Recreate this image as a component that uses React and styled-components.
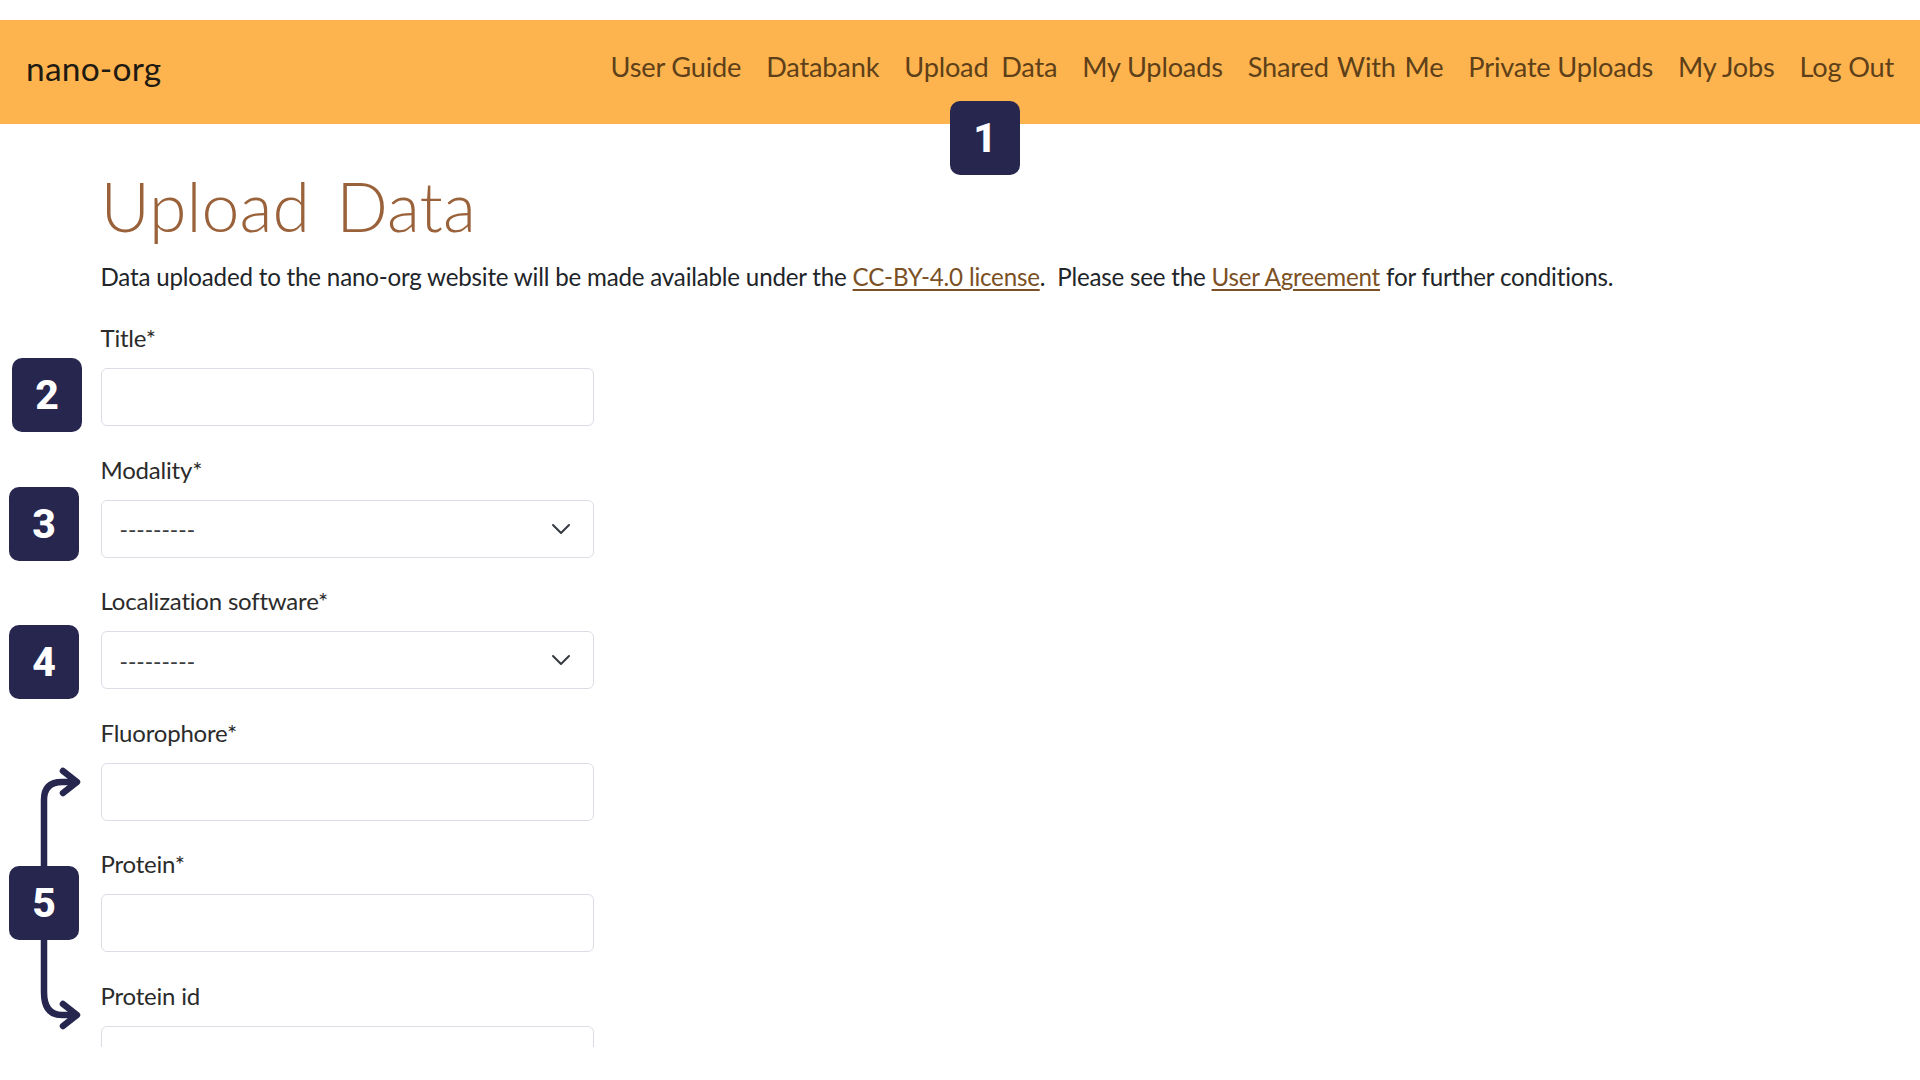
import React from "react";
import styled, { createGlobalStyle } from "styled-components";

const Global = createGlobalStyle`
  html, body { margin: 0; padding: 0; background: #fff; }
  body { font-family: Lato, "Noto Sans", sans-serif; color: #212529; }
`;

const Page = styled.div`
  position: relative;
  width: 1920px;
  height: 1047px;
  padding-top: 19.5px;
  box-sizing: border-box;
  overflow: hidden;
`;
const Navbar = styled.nav`
  height: 104.5px;
  background: #feb44e;
  display: flex;
  align-items: center;
  justify-content: space-between;
  padding: 0 26px 0 26px;
`;
const Brand = styled.a`
  font-size: 33.5px;
  color: #1f1a12;
  letter-spacing: 0.2px;
  margin-top: -7px;
`;
const NavList = styled.div`
  display: flex;
  gap: 25px;
  margin-top: -10px;
`;
const NavItem = styled.a`
  font-size: 27.2px;
  font-weight: 400;
  color: #5d4019;
  white-space: nowrap;
  word-spacing: ${(p) => p.$ws || 0}px;
  letter-spacing: -0.2px;
`;
const Main = styled.main`
  padding-left: 100.5px;
`;
const Heading = styled.h1`
  margin: 41px 0 0;
  font-size: 68px;
  line-height: 82px;
  font-weight: 300;
  color: #9a623a;
  word-spacing: 8px;
`;
const Lead = styled.p`
  margin: 12px 0 0;
  font-size: 24.15px;
  line-height: 36px;
  color: #212529;
  white-space: nowrap;
  letter-spacing: -0.2px;
`;
const Form = styled.form`
  margin-top: 25px;
  display: flex;
  flex-direction: column;
  gap: 25.6px;
`;
const Field = styled.div`
  display: flex;
  flex-direction: column;
  gap: 12px;
  width: 493.5px;
`;
const Label = styled.label`
  font-size: 24px;
  line-height: 36px;
  color: #2b2b2b;
  letter-spacing: -0.2px;
`;
const TextInput = styled.input`
  height: 58px;
  box-sizing: border-box;
  border: 1.5px solid #dadee4;
  border-radius: 6px;
  background: #fff;
  flex: none;
`;
const SelectWrap = styled.div`
  position: relative;
  height: 58px;
  flex: none;
`;
const Select = styled.select`
  appearance: none;
  width: 100%;
  height: 100%;
  box-sizing: border-box;
  border: 1.5px solid #dadee4;
  border-radius: 6px;
  background: #fff;
  padding: 2px 0 0 18px;
  font-family: Lato, sans-serif;
  font-size: 22.6px;
  color: #3a3d42;
`;
const Chevron = styled.svg`
  position: absolute;
  right: 21px;
  top: 17px;
  width: 24px;
  height: 24px;
  fill: none;
  stroke: #343a40;
  stroke-width: 2;
  stroke-linecap: round;
  stroke-linejoin: round;
`;
const Badge = styled.div`
  position: absolute;
  left: ${(p) => p.$x}px;
  top: ${(p) => p.$y}px;
  width: 70px;
  height: 74px;
  background: #27264f;
  border-radius: 10px;
  display: flex;
  align-items: center;
  justify-content: center;
  color: #fff;
  font-family: Roboto, sans-serif;
  font-weight: 800;
  font-size: 41px;
`;
const ArrowLayer = styled.svg`
  position: absolute;
  left: 30px;
  top: 760px;
  width: 60px;
  height: 270px;
  fill: none;
  stroke: #27264f;
  stroke-width: 6.5;
  stroke-linecap: round;
  stroke-linejoin: round;
`;
const Link = styled.a`
  color: #7b5024;
  text-decoration: underline;
  text-underline-offset: 3px;
`;

const navItems = [
  ["User Guide"],
  ["Databank"],
  ["Upload Data", 6],
  ["My Uploads"],
  ["Shared With Me", 2],
  ["Private Uploads"],
  ["My Jobs"],
  ["Log Out"],
];

const Dropdown = () => (
  <SelectWrap>
    <Select defaultValue="">
      <option value="">---------</option>
    </Select>
    <Chevron viewBox="0 0 24 24">
      <path d="M4 8 L12 16 L20 8" />
    </Chevron>
  </SelectWrap>
);

export default function App() {
  return (
    <>
      <Global />
      <Page>
        <Navbar>
          <Brand>nano-org</Brand>
          <NavList>
            {navItems.map(([t, ws]) => (
              <NavItem key={t} $ws={ws}>{t}</NavItem>
            ))}
          </NavList>
        </Navbar>
        <Main>
          <Heading>Upload Data</Heading>
          <Lead>
            Data uploaded to the nano-org website will be made available under the{" "}
            <Link>CC-BY-4.0 license</Link>.&nbsp; Please see the <Link>User Agreement</Link> for further conditions.
          </Lead>
          <Form>
            <Field><Label>Title*</Label><TextInput /></Field>
            <Field><Label>Modality*</Label><Dropdown /></Field>
            <Field><Label>Localization software*</Label><Dropdown /></Field>
            <Field><Label>Fluorophore*</Label><TextInput /></Field>
            <Field><Label>Protein*</Label><TextInput /></Field>
            <Field><Label>Protein id</Label><TextInput /></Field>
          </Form>
        </Main>
        <Badge $x={950} $y={101}>1</Badge>
        <Badge $x={12} $y={358}>2</Badge>
        <Badge $x={9} $y={487}>3</Badge>
        <Badge $x={9} $y={625}>4</Badge>
        <Badge $x={9} $y={866}>5</Badge>
        <ArrowLayer viewBox="0 0 60 270">
          <path d="M14 106 V40 Q14 22 32 22 H46" />
          <path d="M33 11 L47 22 L33 33" />
          <path d="M14 180 V232 Q14 255 32 255 H46" />
          <path d="M33 244 L47 255 L33 266" />
        </ArrowLayer>
      </Page>
    </>
  );
}
